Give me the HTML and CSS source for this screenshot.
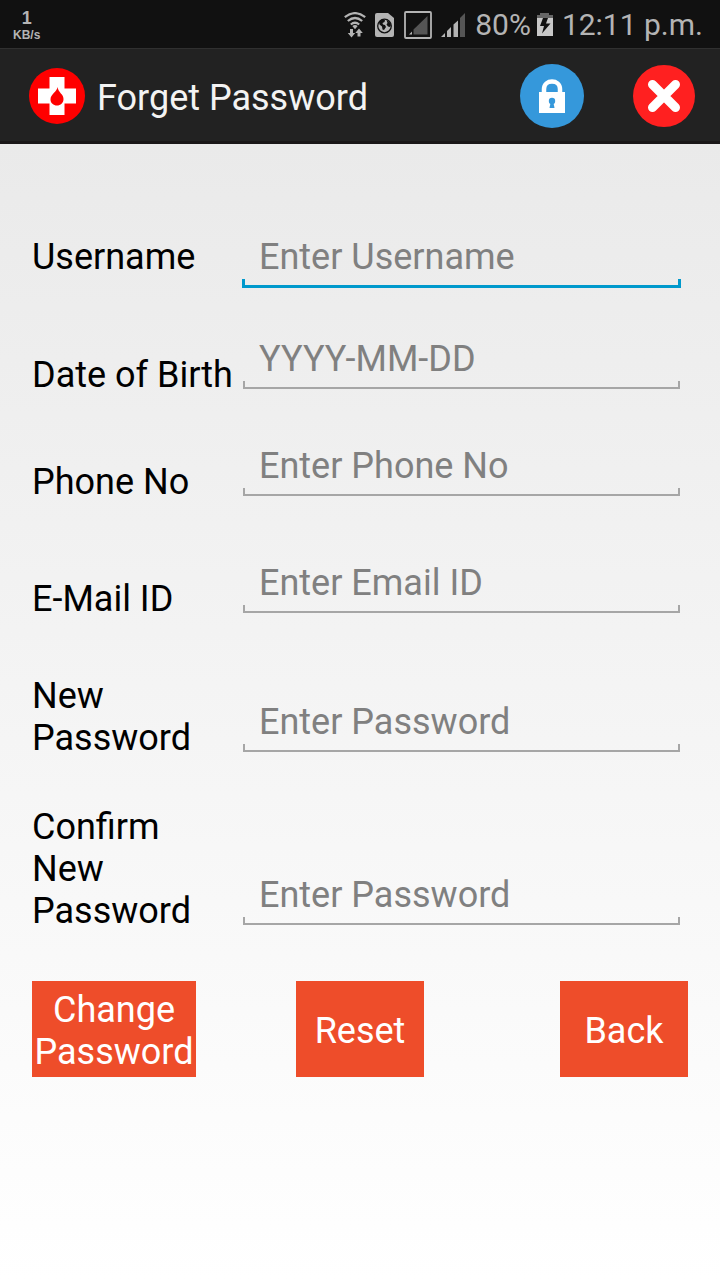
FILE: index.html
```html
<!DOCTYPE html>
<html lang="en">
<head>
<meta charset="utf-8">
<meta name="viewport" content="width=device-width, initial-scale=1">
<title>Forget Password</title>
<link rel="stylesheet" href="styles.css">
</head>
<body>
<div class="status">
  <div class="speed"><span class="speed-value">1</span><span class="speed-unit">KB/s</span></div>
  <div class="status-icons">
    <svg width="22" height="26" viewBox="0 0 22 26" fill="none" stroke="#b4b4b4" stroke-width="2.2">
      <path d="M.8 5.2Q11-3 21.2 5.2M3.8 9Q11 3 18.2 9M6.8 12.5Q11 9 15.2 12.5"/>
      <path fill="#b4b4b4" stroke="none" d="M8.300 14Q11 12 13.700 14L11 17.200zM6 17h3v4h2.200L7.500 25.500 3.800 21H6zM13.500 24.500h3V21h2.300L15 16.500 11.300 21h2.200z"/>
    </svg>
    <svg width="20" height="26" viewBox="0 0 20 26">
      <path fill="#b4b4b4" d="M2 1h11l6 5v17a2 2 0 0 1-2 2H2a2 2 0 0 1-2-2V3a2 2 0 0 1 2-2z"/>
      <circle cx="9.500" cy="14" r="6.800" fill="none" stroke="#111" stroke-width="1.300"/>
      <path fill="#111" d="M4 10l3-2.500 3 .5-.5 2-2 1 .5 1.500 2 .5 1 2-2 3-1.500-.5-.5-3-2.500-2zM11.500 8l3 2 1.500 3-1 2-2-.5-1.500-2 1-1.500z"/>
    </svg>
    <svg width="28" height="28" viewBox="0 0 28 28">
      <rect x="1" y="1" width="26" height="26" rx="1" fill="none" stroke="#b4b4b4" stroke-width="1.800"/>
      <path fill="#555" d="M9.500 18.500L23.500 5v18.500h-14z"/><path fill="#b4b4b4" d="M5 23.500l3-3v3z"/>
    </svg>
    <svg width="25" height="26" viewBox="0 0 25 26" fill="#b4b4b4">
      <path d="M0 25l4-4v4zM6 25v-6l4-4v10zM12.500 25V12.500l4.500-4V25z"/><path fill="#555" d="M19 25V6l5-5v24z"/>
    </svg>
  </div>
  <span class="battery">80%</span>
  <svg width="16" height="24" viewBox="0 0 16 24">
    <path fill="#666" d="M0 2h3V0h9v2h4v4H0z"/><path fill="#c8c8c8" d="M0 5h16v18H0z"/>
    <path fill="#111" d="M6 5h5L9 10.500h4.500L5 20.500l2-7.500H3z"/>
  </svg>
  <span class="clock">12:11 p.m.</span>
</div>
<header class="bar">
  <svg class="logo" width="56" height="56" viewBox="0 0 56 56">
    <circle cx="28" cy="28" r="28" fill="red"/>
    <path fill="#fff" d="M20.500 9h15v11.500h11.500v15H35.500V47h-15V35.500H9v-15h11.500z"/>
    <path fill="red" d="M28.500 19C28 24 21.500 26 21.500 31.500c0 3.500 3 6 6.500 6s6.500-2.500 6.500-6.500c0-5-5-6-6-12z"/>
  </svg>
  <h1 class="title">Forget Password</h1>
  <button class="icon-button" type="button" aria-label="Lock">
    <svg width="64" height="64" viewBox="0 0 64 64">
      <circle cx="32" cy="32" r="32" fill="#3598db"/>
      <path fill="none" stroke="#fff" stroke-width="4.500" d="M24 29v-4c0-10 16-10 16 0v4"/>
      <path fill="#fff" d="M19 28h26v21H19z"/>
      <circle cx="32" cy="37" r="3.200" fill="#3598db"/><path fill="#3598db" d="M30.700 38h2.600l1.200 6h-5z"/>
    </svg>
  </button>
  <button class="icon-button" type="button" aria-label="Close">
    <svg width="62" height="62" viewBox="0 0 62 62">
      <circle cx="31" cy="31" r="31" fill="#ff2020"/>
      <path stroke="#fff" stroke-width="9" stroke-linecap="round" d="M19.500 19.500l23 23M42.500 19.500l-23 23"/>
    </svg>
  </button>
</header>
<main>
  <form class="form">
    <div class="row row-first">
      <label for="username">Username</label>
      <input class="active" id="username" type="text" placeholder="Enter Username">
    </div>
    <div class="row row-birth">
      <label for="birth">Date of Birth</label>
      <input id="birth" type="text" placeholder="YYYY-MM-DD">
    </div>
    <div class="row row-phone">
      <label for="phone">Phone No</label>
      <input id="phone" type="tel" placeholder="Enter Phone No">
    </div>
    <div class="row row-email">
      <label for="email">E-Mail ID</label>
      <input id="email" type="email" placeholder="Enter Email ID">
    </div>
    <div class="row row-new">
      <label for="new">New<br>Password</label>
      <input id="new" type="password" placeholder="Enter Password">
    </div>
    <div class="row row-confirm">
      <label for="confirm">Confirm<br>New<br>Password</label>
      <input id="confirm" type="password" placeholder="Enter Password">
    </div>
    <div class="actions">
      <button class="action wide" type="submit">Change Password</button>
      <button class="action" type="reset">Reset</button>
      <button class="action" type="button">Back</button>
    </div>
  </form>
</main>
</body>
</html>
```
FILE: styles.css
```css
* {
  box-sizing: border-box;
}

body {
  margin: 0;
  min-height: 100vh;
  display: flex;
  flex-direction: column;
  font: 36px/42px Roboto, sans-serif;
  color: #000;
}

svg {
  display: block;
  flex: none;
}

.status {
  display: flex;
  align-items: center;
  height: 48px;
  padding: 2px 17px 0 13px;
  background: #111;
  color: #b4b4b4;
  font-size: 30px;
  white-space: nowrap;
}

.speed {
  display: flex;
  flex-direction: column;
  align-items: center;
  margin-right: auto;
  font-family: "Liberation Sans", Arial, sans-serif;
  font-weight: bold;
}

.speed-value {
  font-size: 18px;
  line-height: 20px;
}

.speed-unit {
  font-size: 12px;
  line-height: 14px;
}

.status-icons {
  display: flex;
  align-items: center;
  gap: 9px;
}

.battery {
  margin: 0 6px 0 9px;
}

.clock {
  margin-left: 9px;
}

.bar {
  display: flex;
  align-items: center;
  height: 96px;
  padding: 2px 25px 0 29px;
  background: #222;
  border-top: 1px solid #303030;
  border-bottom: 3px solid #1a1718;
}

.title {
  flex: 1;
  margin: 0 0 0 12px;
  padding-top: 4px;
  font-size: 36px;
  font-weight: 400;
  color: #f3f3f3;
}

.icon-button {
  padding: 0;
  border: 0;
  background: none;
}

.icon-button + .icon-button {
  margin-left: 49px;
}

main {
  flex: 1;
  background: linear-gradient(#eaeaea, #fff);
}

.form {
  padding: 92px 32px 32px;
}

.row {
  display: grid;
  grid-template-columns: 210px 1fr;
  align-items: end;
  padding-right: 7px;
}

.row-first {
  align-items: start;
}

.row-birth {
  margin-top: 42px;
}

.row-phone {
  margin-top: 48px;
}

.row-email {
  margin-top: 58px;
}

.row-new {
  margin-top: 55px;
}

.row-confirm {
  margin-top: 47px;
}

input {
  --line: #a6a6a6;
  width: calc(100% - 2px);
  min-width: 0;
  height: 52px;
  margin: 0 1px 7px;
  padding: 0 16px 8px;
  border: 0;
  border-radius: 0;
  outline: 0;
  font: inherit;
  color: #000;
  background:
    linear-gradient(var(--line), var(--line)) left bottom / 100% 2px no-repeat,
    linear-gradient(var(--line), var(--line)) left bottom / 2px 8px no-repeat,
    linear-gradient(var(--line), var(--line)) right bottom / 2px 8px no-repeat;
}

input.active {
  --line: #0099cc;
  width: 100%;
  margin: 0 0 7px;
  padding: 0 17px 10px;
  background-size: 100% 3px, 3px 9px, 3px 9px;
}

input::placeholder {
  color: #808080;
  opacity: 1;
}

.actions {
  display: grid;
  grid-template-columns: 1fr auto 1fr;
  margin-top: 49px;
}

.action {
  width: 128px;
  height: 96px;
  padding: 4px 0 0;
  border: 0;
  font: inherit;
  color: #fff;
  background: #ee4d2a;
}

.action.wide {
  width: 164px;
}

.action:last-child {
  justify-self: end;
}
```
